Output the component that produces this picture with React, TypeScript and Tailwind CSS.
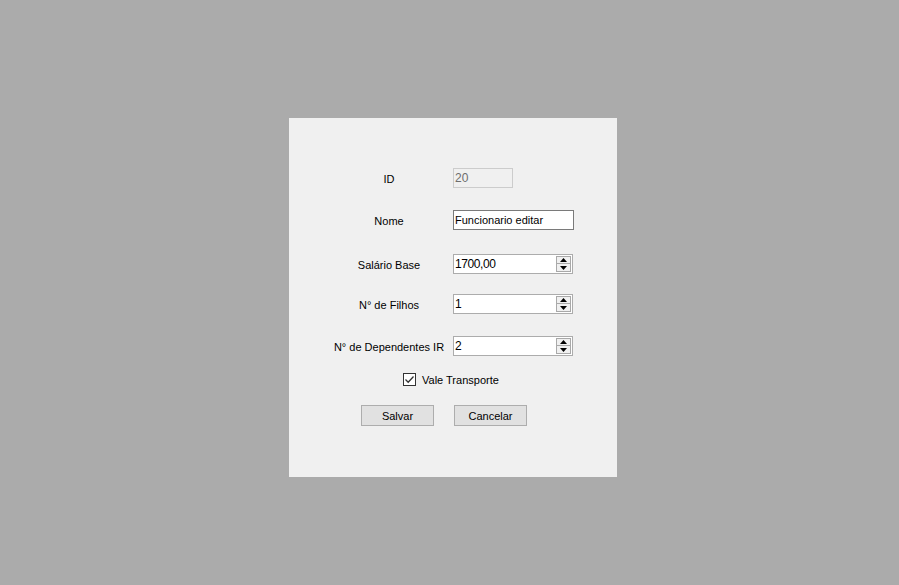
import type { ReactNode } from 'react'

const font = { fontFamily: '"Liberation Sans", Arial, sans-serif' }

function Row({ label, children, className }: { label: string; children: ReactNode; className: string }) {
  return (
    <div className={`flex h-[20px] items-center ${className}`}>
      <span className="ml-[30px] w-[140px] whitespace-nowrap pt-[2px] text-center text-[11px] leading-none text-black">{label}</span>
      <div className="-ml-[6px]">{children}</div>
    </div>
  )
}

function Spinner({ value }: { value: string }) {
  return (
    <div className="flex h-[20px] w-[120px] items-center border border-[#acacac] bg-white">
      <span className="flex-1 pl-[1px] text-[12px] leading-none tracking-[-0.4px] text-black">{value}</span>
      <div className="mr-[1px] flex h-[16px] w-[15px] flex-col">
        <div className="flex h-[8px] items-center justify-center border border-[#a9a9a9] bg-[#f0f0f0]">
          <svg width="7" height="4" viewBox="0 0 7 4">
            <path d="M3.5 0 L7 4 L0 4 Z" fill="#000" />
          </svg>
        </div>
        <div className="flex h-[8px] items-center justify-center border border-t-0 border-[#a9a9a9] bg-[#f0f0f0]">
          <svg width="7" height="4" viewBox="0 0 7 4">
            <path d="M0 0 L7 0 L3.5 4 Z" fill="#000" />
          </svg>
        </div>
      </div>
    </div>
  )
}

export default function App() {
  return (
    <div className="min-h-[585px] bg-[#ababab] pl-[289px] pt-[118px]" style={font}>
      <div className="flex h-[359px] w-[328px] flex-col bg-[#f0f0f0]">
        <Row label="ID" className="mt-[50px]">
          <div className="flex h-[20px] w-[60px] items-center border border-[#cccccc] bg-[#f0f0f0] pl-[1px] text-[12px] leading-none text-[#6d6d6d]">
            20
          </div>
        </Row>
        <Row label="Nome" className="mt-[22px]">
          <div className="flex h-[20px] w-[121px] items-center whitespace-nowrap border border-[#7a7a7a] bg-white pl-[1px] text-[11px] leading-none text-black">
            Funcionario editar
          </div>
        </Row>
        <Row label="Salário Base" className="mt-[24px]">
          <Spinner value="1700,00" />
        </Row>
        <Row label="N° de Filhos" className="mt-[20px]">
          <Spinner value="1" />
        </Row>
        <Row label="N° de Dependentes IR" className="mt-[22px]">
          <Spinner value="2" />
        </Row>
        <div className="ml-[114px] mt-[17px] flex h-[13px] items-center gap-[6px]">
          <div className="flex h-[13px] w-[13px] items-center justify-center border border-[#333333] bg-white">
            <svg width="11" height="11" viewBox="0 0 11 11">
              <path d="M1.5 5.5 L4.2 8.2 L9.5 2.5" fill="none" stroke="#333" strokeWidth="1.3" />
            </svg>
          </div>
          <span className="whitespace-nowrap pt-[2px] text-[11px] leading-none text-black">Vale Transporte</span>
        </div>
        <div className="ml-[72px] mt-[19px] flex gap-[20px]">
          <button className="h-[21px] w-[73px] border border-[#adadad] bg-[#e1e1e1] pt-[1px] text-[11px] leading-none text-black">
            Salvar
          </button>
          <button className="h-[21px] w-[73px] border border-[#adadad] bg-[#e1e1e1] pt-[1px] text-[11px] leading-none text-black">
            Cancelar
          </button>
        </div>
      </div>
    </div>
  )
}
